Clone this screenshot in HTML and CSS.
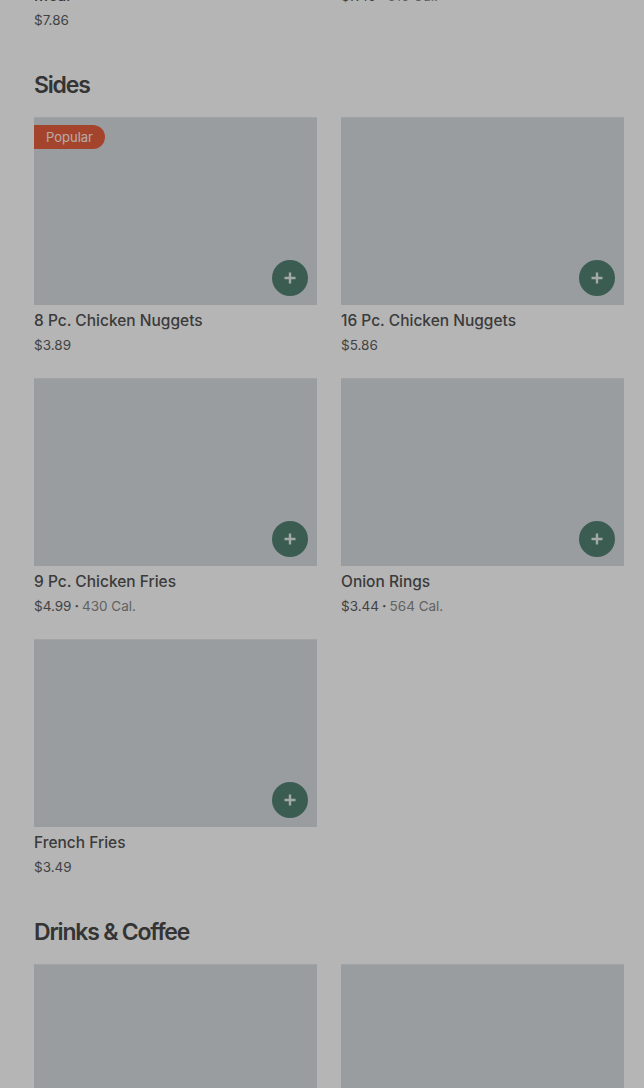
FILE: index.html
```html
<!DOCTYPE html>
<html lang="en">
<head>
    <meta charset="UTF-8">
    <meta name="viewport" content="width=device-width, initial-scale=1.0">
    <title>Menu</title>
    <link rel="stylesheet" href="styles.css">
</head>
<body>
<div class="menu">
    <section class="section first">
        <div class="grid">
            <div class="item">
                <div class="photo"></div>
                <p class="name">Spicy Deluxe Chicken Sandwich<br>Meal</p>
                <p class="price">$7.86</p>
            </div>
            <div class="item">
                <div class="photo"></div>
                <p class="name">Chicken Sandwich</p>
                <p class="price">$7.49<span class="dot">&middot;</span><span class="cal">610 Cal.</span></p>
            </div>
        </div>
    </section>

    <section class="section">
        <h2>Sides</h2>
        <div class="grid">
            <div class="item">
                <div class="photo">
                    <span class="badge">Popular</span>
                    <button class="add"><svg viewBox="0 0 14 14" width="14" height="14"><path d="M7 1.5v11M1.5 7h11" stroke="#e6eeea" stroke-width="2.4" fill="none"/></svg></button>
                </div>
                <p class="name">8 Pc. Chicken Nuggets</p>
                <p class="price">$3.89</p>
            </div>
            <div class="item">
                <div class="photo"><button class="add"><svg viewBox="0 0 14 14" width="14" height="14"><path d="M7 1.5v11M1.5 7h11" stroke="#e6eeea" stroke-width="2.4" fill="none"/></svg></button></div>
                <p class="name">16 Pc. Chicken Nuggets</p>
                <p class="price">$5.86</p>
            </div>
            <div class="item">
                <div class="photo"><button class="add"><svg viewBox="0 0 14 14" width="14" height="14"><path d="M7 1.5v11M1.5 7h11" stroke="#e6eeea" stroke-width="2.4" fill="none"/></svg></button></div>
                <p class="name">9 Pc. Chicken Fries</p>
                <p class="price">$4.99<span class="dot">&middot;</span><span class="cal">430 Cal.</span></p>
            </div>
            <div class="item">
                <div class="photo"><button class="add"><svg viewBox="0 0 14 14" width="14" height="14"><path d="M7 1.5v11M1.5 7h11" stroke="#e6eeea" stroke-width="2.4" fill="none"/></svg></button></div>
                <p class="name">Onion Rings</p>
                <p class="price">$3.44<span class="dot">&middot;</span><span class="cal">564 Cal.</span></p>
            </div>
            <div class="item">
                <div class="photo"><button class="add"><svg viewBox="0 0 14 14" width="14" height="14"><path d="M7 1.5v11M1.5 7h11" stroke="#e6eeea" stroke-width="2.4" fill="none"/></svg></button></div>
                <p class="name">French Fries</p>
                <p class="price">$3.49</p>
            </div>
        </div>
    </section>

    <section class="section">
        <h2>Drinks &amp; Coffee</h2>
        <div class="grid">
            <div class="item">
                <div class="photo"><button class="add"><svg viewBox="0 0 14 14" width="14" height="14"><path d="M7 1.5v11M1.5 7h11" stroke="#e6eeea" stroke-width="2.4" fill="none"/></svg></button></div>
                <p class="name">Coca-Cola</p>
                <p class="price">$1.99</p>
            </div>
            <div class="item">
                <div class="photo"><button class="add"><svg viewBox="0 0 14 14" width="14" height="14"><path d="M7 1.5v11M1.5 7h11" stroke="#e6eeea" stroke-width="2.4" fill="none"/></svg></button></div>
                <p class="name">Iced Coffee</p>
                <p class="price">$2.49</p>
            </div>
        </div>
    </section>
</div>
<div class="backdrop"></div>
</body>
</html>
```

FILE: styles.css
```css
body{
    margin: 0;
    background-color: #ffffff;
    font-family: Inter, "Noto Sans", sans-serif;
    color: #4f4f4f;
    overflow: hidden;
}
.menu{
    padding: 0 20px 0 34px;
    margin-top: -232px;
}
.section{
    margin-top: 39px;
}
.section.first{
    margin-top: 0;
}
h2{
    margin: 0 0 16px 0;
    font-size: 23px;
    line-height: 32px;
    font-weight: 600;
    letter-spacing: -1.2px;
    color: #4a4a4a;
}
.grid{
    display: grid;
    grid-template-columns: 1fr 1fr;
    column-gap: 24px;
    row-gap: 23px;
    align-items: start;
}
.photo{
    position: relative;
    height: 188px;
    background-color: #d9dde2;
    border-top: 1px solid #e3e7ec;
    box-sizing: border-box;
}
.name{
    margin: 4px 0 0 0;
    font-size: 15.5px;
    line-height: 24px;
    font-weight: 450;
    color: #545454;
}
.price{
    margin: 2px 0 0 0;
    font-size: 13.5px;
    line-height: 20px;
    color: #5e5e5e;
}
.dot{
    margin: 0 3px;
    font-weight: 700;
}
.cal{
    color: #8a8a8a;
}
.badge{
    position: absolute;
    left: 0;
    top: 7px;
    height: 24px;
    line-height: 24px;
    padding: 0 12px;
    background-color: #e8603f;
    color: #fff1ec;
    font-size: 13px;
    border-radius: 0 12px 12px 0;
}
.add{
    position: absolute;
    right: 9px;
    bottom: 9px;
    width: 36px;
    height: 36px;
    border: none;
    border-radius: 50%;
    background-color: #548272;
    display: flex;
    align-items: center;
    justify-content: center;
    padding: 0;
}
.backdrop{
    position: fixed;
    inset: 0;
    background-color: rgba(0, 0, 0, 0.29);
}
```
